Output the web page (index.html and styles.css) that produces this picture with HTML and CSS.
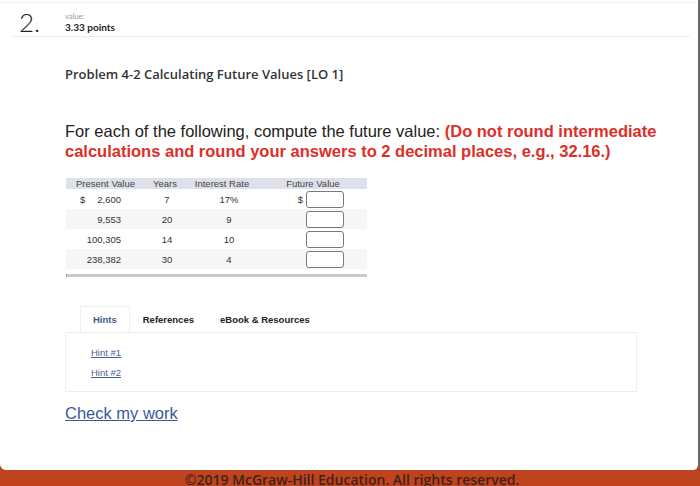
FILE: index.html
```html
<!DOCTYPE html>
<html>
<head>
<meta charset="utf-8">
<link rel="stylesheet" href="styles.css">
</head>
<body>
<div class="card">
  <div class="topline"></div>
  <div class="qhead">
    <div class="qnum">2.</div>
    <div class="qval">
      <div class="vlabel">value:</div>
      <div class="vpoints">3.33 points</div>
    </div>
  </div>
  <div class="content">
    <h2 class="title">Problem 4-2 Calculating Future Values [LO 1]</h2>
    <p class="instr">For each of the following, compute the future value: <span class="red">(Do not round intermediate calculations and round your answers to 2 decimal places, e.g., 32.16.)</span></p>
    <div class="table">
      <div class="th">Present Value</div>
      <div class="th">Years</div>
      <div class="th">Interest Rate</div>
      <div class="th">Future Value</div>

      <div class="td pv split"><span>$</span><span>2,600</span></div>
      <div class="td yr">7</div>
      <div class="td ir">17%</div>
      <div class="td fv"><span class="dollar">$</span><span class="box"></span></div>

      <div class="td pv alt">9,553</div>
      <div class="td yr alt">20</div>
      <div class="td ir alt">9</div>
      <div class="td fv alt"><span class="box"></span></div>

      <div class="td pv">100,305</div>
      <div class="td yr">14</div>
      <div class="td ir">10</div>
      <div class="td fv"><span class="box"></span></div>

      <div class="td pv alt">238,382</div>
      <div class="td yr alt">30</div>
      <div class="td ir alt">4</div>
      <div class="td fv alt"><span class="box"></span></div>
    </div>
    <div class="tablebar"></div>

    <div class="tabs">
      <div class="tab active">Hints</div>
      <div class="tab">References</div>
      <div class="tab">eBook &amp; Resources</div>
    </div>
    <div class="panel">
      <a class="hint" href="#">Hint #1</a>
      <a class="hint" href="#">Hint #2</a>
    </div>
    <a class="check" href="#">Check my work</a>
  </div>
</div>
<div class="footer">©2019 McGraw-Hill Education. All rights reserved.</div>
</body>
</html>
```

FILE: styles.css
```css
html, body {
  margin: 0;
  padding: 0;
}
body {
  width: 700px;
  height: 486px;
  overflow: hidden;
  background: #c0431f;
  font-family: "Liberation Sans", Arial, sans-serif;
}
.card {
  height: 470px;
  box-sizing: border-box;
  background: #fff;
  border-right: 2px solid #6a6a6a;
  border-radius: 0 0 6px 6px;
  overflow: hidden;
}
.topline {
  margin-top: 2px;
  height: 1px;
  background: #f0f0f0;
}
.qhead {
  margin: 0 8px 0 12px;
  height: 33px;
  border-bottom: 1px solid #ececec;
  display: flex;
  align-items: flex-start;
}
.qnum {
  font-family: Lato, "Open Sans", sans-serif;
  font-weight: 300;
  font-size: 26px;
  line-height: 26px;
  margin: 6px 0 0 7px;
  width: 46px;
  color: #222;
}
.qval {
  font-family: Lato, "Open Sans", sans-serif;
  margin-top: 9px;
}
.vlabel {
  font-size: 7.5px;
  line-height: 9px;
  color: #9a9a9a;
}
.vpoints {
  font-size: 10px;
  line-height: 12px;
  font-weight: bold;
  color: #222;
}
.content {
  padding-left: 65px;
}
.title {
  margin: 28px 0 0 0;
  font-family: "Open Sans", Lato, sans-serif;
  font-weight: 600;
  font-size: 13px;
  line-height: 18px;
  color: #333;
}
.instr {
  margin: 38px 0 0 0;
  width: 620px;
  font-size: 16.5px;
  line-height: 20px;
  color: #222;
}
.red {
  color: #dd2f28;
  font-weight: bold;
}
.table {
  margin-top: 17px;
  width: 301px;
  margin-left: 1px;
  display: grid;
  grid-template-columns: 79px 40px 74px 108px;
  font-size: 9.5px;
  color: #333;
}
.th {
  background: #dfe1ea;
  height: 11px;
  line-height: 11px;
  text-align: center;
  color: #444;
}
.td {
  height: 20px;
  display: flex;
  align-items: center;
}
.alt {
  background: #f6f6f6;
}
.pv {
  justify-content: flex-end;
  padding-right: 24px;
}
.pv.split {
  justify-content: space-between;
  padding-left: 14px;
}
.yr {
  justify-content: center;
  padding-left: 4px;
}
.ir {
  justify-content: center;
  padding-left: 14px;
}
.fv {
  justify-content: flex-end;
  padding-right: 23px;
}
.dollar {
  margin-right: 3px;
}
.box {
  width: 36px;
  height: 15px;
  border: 1px solid #7a7a7a;
  border-radius: 3px;
  background: #fff;
}
.tablebar {
  margin: 5px 0 0 1px;
  width: 301px;
  height: 3px;
  background: #c9cbd4;
  border-left: 1px solid #9a9ca4;
  box-sizing: border-box;
}
.tabs {
  margin: 29px 0 0 15px;
  display: flex;
  height: 26px;
}
.tab {
  padding: 0 12px;
  font-size: 9.5px;
  font-weight: bold;
  line-height: 26px;
  color: #222;
  border: 1px solid transparent;
  border-bottom: none;
}
.tab.active {
  color: #3d5a8c;
  border-color: #eeeeee;
  background: #fff;
}
.panel {
  width: 572px;
  height: 60px;
  border: 1px solid #eeeeee;
  box-sizing: border-box;
  padding: 10px 0 0 25px;
  display: flex;
  flex-direction: column;
  align-items: flex-start;
}
.hint {
  font-size: 9.5px;
  line-height: 20px;
  color: #4a5f8f;
}
.check {
  display: inline-block;
  margin-top: 11px;
  font-size: 16.5px;
  line-height: 20px;
  color: #3b5a94;
}
.footer {
  height: 16px;
  text-align: center;
  font-family: "Open Sans", Lato, sans-serif;
  font-weight: 600;
  font-size: 14px;
  line-height: 19px;
  color: #3e2217;
  padding-left: 4px;
  white-space: nowrap;
  overflow: hidden;
}
```
